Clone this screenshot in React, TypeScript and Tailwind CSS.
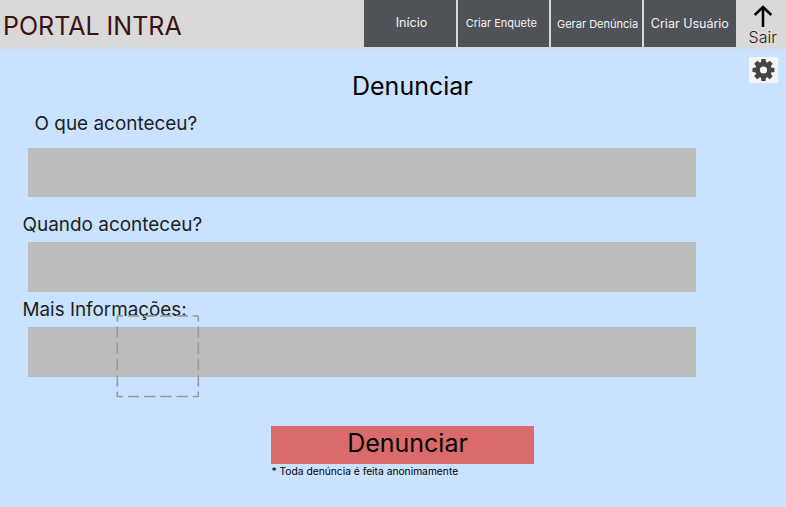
const navItems = [
  { label: 'Início', style: 'text-[12.6px] pl-[3px]' },
  { label: 'Criar Enquete', style: 'text-[11px] pb-px pr-1' },
  { label: 'Gerar Denúncia', style: 'text-[11px] pt-px pl-[2px]' },
  { label: 'Criar Usuário', style: 'text-[12.5px] pt-px' },
];

function Header() {
  return (
    <header className="flex h-[48.5px] justify-between bg-[#d9d9d9]">
      <h1 className="pl-[3px] pt-[6px] text-[25px] leading-[40px] text-[#3b1212]">PORTAL INTRA</h1>
      <div className="flex">
        <nav className="flex h-[47px] gap-[2px]">
          {navItems.map((item) => (
            <button
              key={item.label}
              className={`flex w-[91.3px] items-center justify-center whitespace-nowrap bg-[#4f5256] text-[#f3f3f3] ${item.style}`}
            >
              {item.label}
            </button>
          ))}
        </nav>
        <button className="flex w-[50.5px] flex-col items-center pl-[4px] pt-[5px] text-[#3b1212]">
          <svg width="20" height="22" viewBox="0 0 20 22" fill="none" stroke="#000" strokeWidth="2.5">
            <path d="M10 22V2M1.7 10L10 2L18.3 10" />
          </svg>
          <span className="text-[16px] font-[350] leading-[20px]">Sair</span>
        </button>
      </div>
    </header>
  );
}

function Gear() {
  return (
    <svg width="29" height="26" viewBox="-14.5 -13 29 26">
      <g fill="#454545">
        {[0, 45, 90, 135, 180, 225, 270, 315].map((angle) => (
          <path key={angle} d="M-2.7 -6L-2.1 -11H2.1L2.7 -6Z" transform={`rotate(${angle})`} />
        ))}
      </g>
      <circle r="5.9" fill="none" stroke="#454545" strokeWidth="4.6" />
    </svg>
  );
}

function DashedFrame() {
  return (
    <svg className="absolute left-[116px] top-[315px]" width="84" height="83" viewBox="0 0 84 83" fill="none">
      <g stroke="#999" strokeWidth="1.6" strokeDasharray="11.2 5" strokeDashoffset="5.6">
        <path d="M1.3 0.9H82.3" />
        <path d="M1.3 81.5H82.3" />
        <path d="M1.3 1V82" />
        <path d="M82.3 1V82" />
      </g>
    </svg>
  );
}

export default function App() {
  return (
    <div className="relative h-[507px] w-[786px] overflow-hidden bg-[#c9e2ff] font-['Inter',sans-serif]">
      <Header />
      <main className="flex flex-col">
        <div className="flex h-[62px] justify-between pl-[352px] pr-[8px] pt-[8.5px]">
          <h2 className="pt-[13px] text-[25px] leading-[32px] text-black">Denunciar</h2>
          <button className="h-[26px] w-[29px] bg-[#f5f5f5]">
            <Gear />
          </button>
        </div>
        <form className="flex flex-col text-[18.95px] leading-[26px] text-[#1e1e1e]">
          <label className="flex h-[37px] pl-[34.5px] pt-[0.5px]">O que aconteceu?</label>
          <div className="ml-[28px] h-[49.5px] w-[668px] bg-[#bcbcbc]" />
          <label className="flex h-[45px] pl-[22.5px] pt-[14.5px]">Quando aconteceu?</label>
          <div className="ml-[28px] h-[50px] w-[668px] bg-[#bcbcbc]" />
          <label className="flex h-[35px] pl-[22.5px] pt-[5px] text-[18.85px]">Mais Informações:</label>
          <div className="ml-[28px] h-[49.5px] w-[668px] bg-[#bcbcbc]" />
          <button
            type="button"
            className="ml-[271px] mt-[49px] h-[38.5px] w-[263px] bg-[#db6b6b] pb-[4px] pl-[10px] text-[25px] leading-[34px] text-black"
          >
            Denunciar
          </button>
          <p className="pl-[271.5px] text-[10.25px] leading-[14px] text-black">* Toda denúncia é feita anonimamente</p>
        </form>
      </main>
      <DashedFrame />
    </div>
  );
}
